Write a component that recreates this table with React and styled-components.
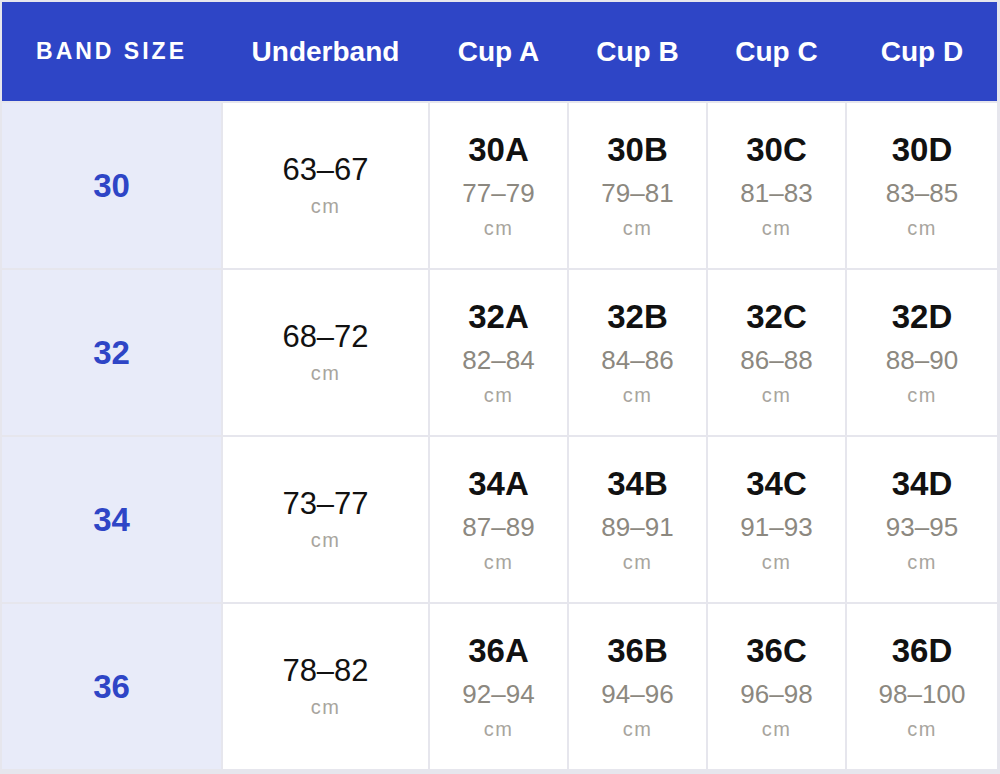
import React from "react";
import styled, { createGlobalStyle } from "styled-components";

const GlobalStyle = createGlobalStyle`
  html, body {
    margin: 0;
    padding: 0;
    background: #ffffff;
  }
  body {
    font-family: "Liberation Sans", Arial, Helvetica, sans-serif;
  }
`;

const columns = "219px 205px 137px 137px 137px 150px";

const Table = styled.div`
  display: grid;
  grid-template-columns: ${columns};
  grid-template-rows: 99px repeat(4, 165px);
  gap: 2px;
  padding: 2px 3px 5px 2px;
  background: #e6e6ed;
  width: 1000px;
  height: 774px;
  box-sizing: border-box;
`;

const HeaderRow = styled.div`
  grid-column: 1 / -1;
  display: grid;
  grid-template-columns: ${columns};
  column-gap: 2px;
  background: #2e45c6;
  color: #ffffff;
`;

const HeaderCell = styled.div`
  display: flex;
  align-items: center;
  justify-content: center;
  font-weight: 700;
  font-size: ${(p) => (p.$caps ? "23px" : "28px")};
  letter-spacing: ${(p) => (p.$caps ? "3px" : "0")};
  text-transform: ${(p) => (p.$caps ? "uppercase" : "none")};
`;

const BandCell = styled.div`
  background: #e8ebf9;
  color: #2e45c6;
  display: flex;
  align-items: center;
  justify-content: center;
  font-weight: 700;
  font-size: 33px;
`;

const Cell = styled.div`
  background: #ffffff;
  display: flex;
  flex-direction: column;
  align-items: center;
  justify-content: center;
`;

const Size = styled.div`
  font-weight: 700;
  font-size: 33px;
  color: #111111;
  line-height: 40px;
`;

const Range = styled.div`
  font-size: ${(p) => (p.$dark ? "31px" : "26px")};
  color: ${(p) => (p.$dark ? "#111111" : "#8c8880")};
  line-height: ${(p) => (p.$dark ? "36px" : "34px")};
  margin-top: ${(p) => (p.$dark ? "0" : "6px")};
`;

const Unit = styled.div`
  font-size: 20px;
  letter-spacing: 1.5px;
  color: #a8a59e;
  line-height: 26px;
  margin-top: 5px;
`;

const cups = ["A", "B", "C", "D"];

const rows = [
  { band: 30, under: "63–67", cups: ["77–79", "79–81", "81–83", "83–85"] },
  { band: 32, under: "68–72", cups: ["82–84", "84–86", "86–88", "88–90"] },
  { band: 34, under: "73–77", cups: ["87–89", "89–91", "91–93", "93–95"] },
  { band: 36, under: "78–82", cups: ["92–94", "94–96", "96–98", "98–100"] },
];

export default function App() {
  return (
    <>
      <GlobalStyle />
      <Table>
        <HeaderRow>
          <HeaderCell $caps>Band Size</HeaderCell>
          <HeaderCell>Underband</HeaderCell>
          {cups.map((c) => (
            <HeaderCell key={c}>Cup {c}</HeaderCell>
          ))}
        </HeaderRow>
        {rows.map((row) => (
          <React.Fragment key={row.band}>
            <BandCell>{row.band}</BandCell>
            <Cell>
              <Range $dark>{row.under}</Range>
              <Unit>cm</Unit>
            </Cell>
            {row.cups.map((range, i) => (
              <Cell key={cups[i]}>
                <Size>
                  {row.band}
                  {cups[i]}
                </Size>
                <Range>{range}</Range>
                <Unit>cm</Unit>
              </Cell>
            ))}
          </React.Fragment>
        ))}
      </Table>
    </>
  );
}
